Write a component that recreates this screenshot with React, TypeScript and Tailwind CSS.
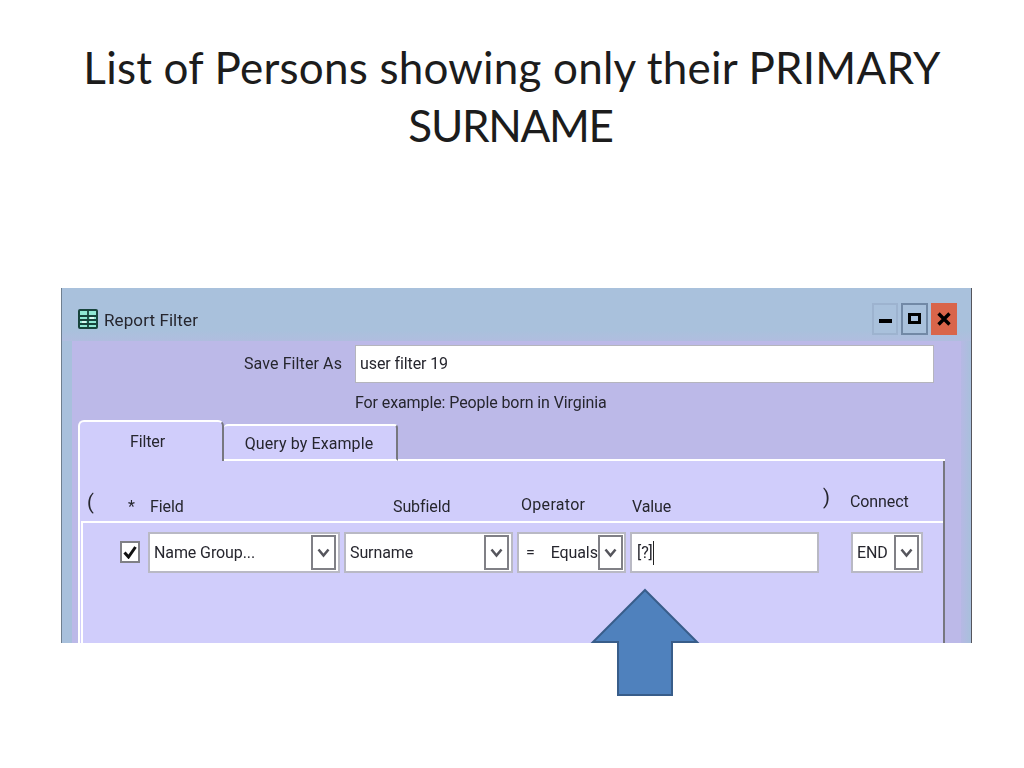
import React from "react";

function Chevron() {
  return (
    <svg width="13" height="10" viewBox="0 0 13 10">
      <path d="M1.5 1.5 L6.5 7.5 L11.5 1.5" fill="none" stroke="#55555c" strokeWidth="2.5" />
    </svg>
  );
}

function Combo({ label, width, spread }: { label: string; width: string; spread?: boolean }) {
  return (
    <div className={`${width} h-[41px] bg-white border-2 border-[#b9b9c4] flex items-center justify-between pl-[4px] pr-[2px]`}>
      <span className={spread ? "flex gap-[16px]" : ""}>
        {spread ? (
          <>
            <span className="ml-[3px]">=</span>
            <span>{label}</span>
          </>
        ) : (
          label
        )}
      </span>
      <div className="w-[25px] h-[35px] shrink-0 bg-white border-2 border-[#808086] flex items-center justify-center">
        <Chevron />
      </div>
    </div>
  );
}

export default function App() {
  return (
    <div className="relative w-[1024px] h-[768px] bg-white overflow-hidden flex flex-col">
      {/* Slide title */}
      <h1 className="pt-[38px] h-[288px] text-center text-[44px] leading-[58px] text-[#1c1c1c] font-['Lato',sans-serif]">
        <span className="tracking-[0.2px]">List of Persons showing only their PRIMARY</span>
        <br />
        <span className="tracking-[-1.3px] mr-[3px]">SURNAME</span>
      </h1>

      {/* Report Filter window */}
      <div className="ml-[61px] w-[911px] h-[355px] flex flex-col border-l border-l-[#6f7f8f] border-r border-r-[#55555c] text-[16px] tracking-[-0.1px] text-[#26262e] font-['Roboto',sans-serif] bg-[#a9c1dc] blur-[0.4px]">
        <div className="h-[53px] shrink-0 flex items-start bg-linear-to-b from-[#a9c1dc] from-80% to-[#b0bddf]">
          <svg className="ml-[16px] mt-[21px]" width="20" height="20" viewBox="0 0 20 20">
            <rect x="0" y="0" width="20" height="20" rx="2" fill="#17443c" />
            <rect x="2" y="2" width="16" height="16" fill="#8fe8d4" />
            <path d="M2 7 H18 M2 11 H18 M2 15 H18 M10 2 V18" stroke="#17443c" strokeWidth="1.8" />
            <path d="M12 9 H16 M4 13 H8" stroke="#f2fffb" strokeWidth="1.6" />
          </svg>
          <span className="ml-[6px] mt-[21px] leading-[22px] text-[17px] tracking-[0.1px]">Report Filter</span>
          <div className="ml-auto mr-[14px] mt-[15px] flex gap-[3px]">
            <div className="w-[26px] h-[32px] bg-[#a9c1dc] border-2 border-[#9db3cf] flex items-center justify-center">
              <div className="w-[13px] h-[4px] bg-black mt-[4px]" />
            </div>
            <div className="w-[27px] h-[32px] bg-[#a9c1dc] border-2 border-[#7289a6] flex items-center justify-center">
              <div className="w-[13px] h-[11px] border-[3px] border-black mb-[2px]" />
            </div>
            <div className="w-[26px] h-[32px] bg-[#d9654a] flex items-center justify-center">
              <svg width="14" height="14" viewBox="0 0 14 14">
                <path d="M1.5 1.5 L12.5 12.5 M12.5 1.5 L1.5 12.5" stroke="#000" strokeWidth="3.4" />
              </svg>
            </div>
          </div>
        </div>

        <div className="flex-1 flex min-h-0">
          <div className="w-[10px] shrink-0 bg-[#a8c0dc]" />

          <div className="w-[889px] shrink-0 pl-[6px] flex flex-col bg-[#bcb9e8]">
            <div className="mt-[4px] flex items-center h-[38px]">
              <span className="w-[264px] text-right tracking-[0.1px]">Save Filter As</span>
              <div className="ml-[13px] w-[579px] h-[38px] bg-white border border-[#b5b5bd] flex items-center pl-[4px]">
                user filter 19
              </div>
            </div>
            <div className="mt-[9px] ml-[277px] h-[22px] leading-[22px]">For example: People born in Virginia</div>

            {/* Tabs */}
            <div className="mt-[6px] h-[41px] shrink-0 flex items-end">
              <div className="w-[146px] h-[41px] bg-[#d0cdfb] rounded-t-md border-t-2 border-l-2 border-t-white border-l-white border-r-2 border-r-[#77777f] flex justify-center pr-[7px] pt-[8px]">
                Filter
              </div>
              <div className="w-[174px] h-[37px] bg-[#d0cdfb] rounded-t-sm border-t-2 border-t-white border-r-2 border-r-[#77777f] border-b-2 border-b-white flex justify-center pt-[6px] pr-[2px] tracking-[0.1px]">
                Query by Example
              </div>
              <div className="w-[547px] h-[2px] bg-white" />
            </div>

            {/* Tab panel */}
            <div className="w-[867px] flex-1 min-h-0 bg-[#d0cdfb] border-r-2 border-r-[#77777f] border-l-2 border-l-white flex flex-col">
              <div className="h-[60px] shrink-0 pl-[7px] flex items-start">
                <span className="w-[41px] mt-[29px] text-[20px] leading-[24px]">(</span>
                <span className="w-[22px] mt-[34px] leading-[24px]">*</span>
                <span className="w-[243px] mt-[34px] leading-[24px]">Field</span>
                <span className="w-[128px] mt-[34px] leading-[24px]">Subfield</span>
                <span className="w-[111px] mt-[32px] leading-[24px] tracking-[0.3px]">Operator</span>
                <span className="w-[191px] mt-[34px] leading-[24px]">Value</span>
                <span className="w-[27px] mt-[24px] text-[20px] leading-[24px]">)</span>
                <span className="mt-[29px] leading-[24px]">Connect</span>
              </div>
              <div className="ml-[1px] flex-1 border-t-2 border-l-2 border-white pt-[9px] flex items-start">
                <div className="ml-[37px] mt-[9px] w-[20px] h-[22px] bg-white border-2 border-[#808086] flex items-center justify-center">
                  <svg width="14" height="14" viewBox="0 0 14 14">
                    <path d="M1.5 7.5 L5.5 12 L12.5 2" fill="none" stroke="#111" strokeWidth="3" />
                  </svg>
                </div>
                <div className="ml-[8px] flex gap-[4px]">
                  <Combo label="Name Group..." width="w-[192px]" />
                  <Combo label="Surname" width="w-[169px]" />
                  <Combo label="Equals" width="w-[109px]" spread />
                  <div className="w-[189px] h-[41px] bg-white border-2 border-[#b9b9c4] flex items-center pl-[5px]">
                    [?]
                    <span className="w-px h-[24px] bg-[#222]" />
                  </div>
                </div>
                <div className="ml-[32px]">
                  <Combo label="END" width="w-[72px]" />
                </div>
              </div>
            </div>
          </div>

          <div className="w-[10px] shrink-0 bg-linear-to-r from-[#b6b8e4] to-[#a8c0dc]" />
        </div>
      </div>

      {/* Arrow over the screenshot */}
      <svg className="absolute left-[590px] top-[586px]" width="110" height="112" viewBox="0 0 110 112">
        <path d="M55 4 L107 56 L82 56 L82 109 L28 109 L28 56 L3 56 Z" fill="#4f81bd" stroke="#385d8a" strokeWidth="2" />
      </svg>
    </div>
  );
}
